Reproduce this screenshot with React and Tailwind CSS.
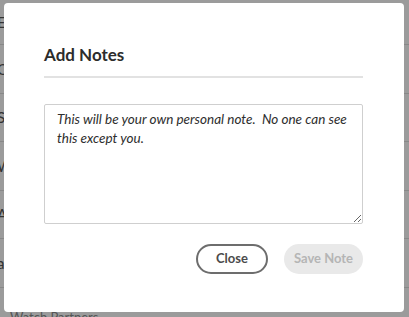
import React from "react";

const ROWS = ["Edit", "Comments", "Share", "Watch", "Add", "about"];

export default function App() {
  return (
    <div className="relative w-[409px] h-[317px] overflow-hidden bg-[#9b9b9b] font-['Lato',sans-serif]">
      <div className="flex flex-col">
        <div className="h-[45px] border-b border-[#888] flex items-center -ml-[3px] text-[15px] text-[#333]">{ROWS[0]}</div>
        {ROWS.slice(1).map((r) => (
          <div key={r} className="h-[48.5px] border-b border-[#888] flex items-center -ml-[3px] text-[15px] text-[#333]">
            {r}
          </div>
        ))}
        <div className="pt-[20px] pl-[10px] text-[13px] text-[#555]">Watch Partners</div>
      </div>

      <div className="absolute left-[4px] top-[3px] w-[400px] h-[309px] rounded-[4px] bg-white pl-[40px] pr-[41px] pt-[42px]">
        <h2 className="text-[17px] leading-[20px] font-bold text-[#2c2c2c]">Add Notes</h2>
        <div className="mt-[11px] h-[2px] bg-[#e2e2e2]" />
        <textarea
          readOnly
          className="mt-[26px] block w-full h-[120px] border border-[#cfcfcf] rounded-[2px] pl-[12px] pr-[10px] pt-[5px] text-[13.5px] leading-[19px] italic text-[#2e2e2e] outline-none resize-y"
          defaultValue={"This will be your own personal note.  No one can see this except you."}
        />
        <div className="mt-[20px] flex justify-end gap-[16px]">
          <button className="w-[72px] h-[30px] rounded-full border-2 border-[#6d6d6d] text-[13px] font-bold text-[#4b4b4b]">
            Close
          </button>
          <button className="w-[79px] h-[30px] rounded-full bg-[#e9e9e9] text-[13px] font-bold text-[#b5b5b5]">
            Save Note
          </button>
        </div>
      </div>
    </div>
  );
}
